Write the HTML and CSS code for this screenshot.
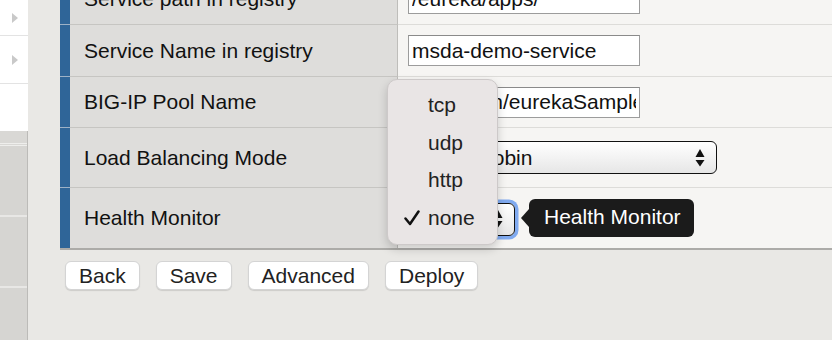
FILE: index.html
```html
<!DOCTYPE html>
<html>
<head>
<meta charset="utf-8">
<link rel="stylesheet" href="styles.css">
</head>
<body>
<div class="app">
  <aside class="sidebar">
    <div class="side-item short"><span class="tri"></span></div>
    <div class="side-item tall"><span class="tri"></span></div>
    <div class="side-blank"></div>
    <div class="side-gray">
      <div class="side-head"></div>
      <div class="side-row"></div>
      <div class="side-row"></div>
      <div class="side-row last"></div>
    </div>
  </aside>
  <main class="main">
    <div class="form">
      <div class="row r1">
        <div class="bar"></div>
        <div class="label">Service path in registry</div>
        <div class="value"><input class="field" type="text" value="/eureka/apps/"></div>
      </div>
      <div class="row r2">
        <div class="bar"></div>
        <div class="label">Service Name in registry</div>
        <div class="value"><input class="field" type="text" value="msda-demo-service"></div>
      </div>
      <div class="row r3">
        <div class="bar"></div>
        <div class="label">BIG-IP Pool Name</div>
        <div class="value"><input class="field" type="text" value="/Common/eurekaSamplePool"></div>
      </div>
      <div class="row r4">
        <div class="bar"></div>
        <div class="label">Load Balancing Mode</div>
        <div class="value">
          <div class="select wide">
            <span class="sel-text">round-robin</span>
            <svg class="arrows" width="10" height="18" viewBox="0 0 10 18"><path d="M0.5 8 L5 0 L9.5 8 Z M0.5 11 L9.5 11 L5 17.5 Z" fill="#111"/></svg>
          </div>
        </div>
      </div>
      <div class="row r5 last">
        <div class="bar"></div>
        <div class="label">Health Monitor</div>
        <div class="value">
          <div class="select-wrap">
            <div class="select small focus">
              <span class="sel-text">none</span>
              <svg class="arrows" width="10" height="18" viewBox="0 0 10 18"><path d="M0.5 8 L5 0 L9.5 8 Z M0.5 11 L9.5 11 L5 17.5 Z" fill="#111"/></svg>
            </div>
            <div class="popup">
              <div class="opt">tcp</div>
              <div class="opt">udp</div>
              <div class="opt">http</div>
              <div class="opt checked"><svg class="check" width="16" height="16" viewBox="0 0 16 16"><path d="M1.5 8.5 L6 14 L14.5 1.5" fill="none" stroke="#111" stroke-width="2.5" stroke-linecap="round" stroke-linejoin="round"/></svg>none</div>
            </div>
            <div class="tooltip">Health Monitor</div>
          </div>
        </div>
      </div>
    </div>
    <div class="actions">
      <button class="btn">Back</button>
      <button class="btn">Save</button>
      <button class="btn">Advanced</button>
      <button class="btn">Deploy</button>
    </div>
  </main>
</div>
</body>
</html>
```
FILE: styles.css
```css
* { box-sizing: border-box; }

body {
  margin: 0;
  height: 340px;
  overflow: hidden;
  background: #e9e8e5;
  font-family: "Liberation Sans", Arial, sans-serif;
  font-size: 21px;
  color: #111;
}

.app {
  display: flex;
  height: 340px;
}

/* sidebar */
.sidebar {
  width: 28px;
  flex: none;
  display: flex;
  flex-direction: column;
}
.side-item {
  background: #fff;
  border-bottom: 1px solid #e3e3e3;
  display: flex;
  align-items: center;
  padding-left: 12px;
}
.side-item.short { height: 36px; }
.side-item.tall { height: 48px; }
.tri {
  width: 0;
  height: 0;
  border-top: 5.5px solid transparent;
  border-bottom: 5.5px solid transparent;
  border-left: 6px solid #c9c9c9;
}
.side-blank {
  height: 47px;
  background: #fff;
}
.side-gray {
  flex: 1;
  width: 28px;
  background: #d6d5d2;
  border-right: 1px solid #bcbbb8;
  display: flex;
  flex-direction: column;
}
.side-head {
  height: 15px;
  background: #d9d8d5;
  border-bottom: 3px double #eeeeec;
}
.side-row {
  height: 71px;
  border-bottom: 2px solid #e8e7e5;
}
.side-row.last { flex: 1; border-bottom: none; }

/* main */
.main {
  flex: 1;
  padding-left: 32px;
  display: flex;
  flex-direction: column;
}
.form {
  margin-top: -27px;
  border-bottom: 2px solid #acaba8;
}
.row {
  display: grid;
  grid-template-columns: 10px 328px 1fr;
}
.r1, .r2 { height: 52px; }
.r3 { height: 51px; }
.r4, .r5 { height: 60px; }

.bar {
  background: #2f6598;
  border-bottom: 1px solid #9db1c6;
}
.label {
  background: #dedddb;
  border-right: 1px solid #bebdba;
  border-bottom: 1px solid #c6c5c2;
  padding-left: 14px;
  display: flex;
  align-items: center;
  white-space: nowrap;
}
.value {
  background: #f6f5f3;
  border-bottom: 1px solid #dddcd9;
  padding-left: 10px;
  display: flex;
  align-items: center;
}
.row.last .bar,
.row.last .label,
.row.last .value { border-bottom: none; }

.field {
  width: 232px;
  height: 31px;
  border: 1px solid #9c9c9c;
  border-top-color: #8a8a8a;
  background: #fff;
  padding: 0 3px;
  font-family: "Liberation Sans", Arial, sans-serif;
  font-size: 21px;
  color: #111;
  outline: none;
}

.select {
  height: 33px;
  border: 1.6px solid #111;
  border-radius: 6px;
  background: linear-gradient(#ffffff, #f3f3f3 50%, #e6e6e6);
  display: flex;
  align-items: center;
  justify-content: space-between;
  padding: 0 11px 0 16px;
}
.select.wide { width: 309px; }
.select.small { width: 107px; margin-top: 2px; }
.select.focus { box-shadow: 0 0 0 3.5px #80aaf0; }
.arrows { flex: none; }

.select-wrap { position: relative; }

.popup {
  position: absolute;
  left: -21px;
  top: -121.5px;
  width: 111px;
  height: 166px;
  background: #e9e5e5;
  border: 1px solid #cdc9c9;
  border-radius: 10px;
  box-shadow: 0 4px 10px rgba(0,0,0,0.18);
  padding-top: 6px;
}
.opt {
  height: 37.67px;
  line-height: 37.67px;
  padding-left: 40px;
  color: #222;
  position: relative;
}
.check {
  position: absolute;
  left: 16px;
  top: 11px;
}

.tooltip {
  position: absolute;
  left: 121px;
  top: -1.5px;
  height: 38px;
  padding: 0 13px 2px 15px;
  background: #1b1b1b;
  color: #fff;
  border-radius: 6px;
  display: flex;
  align-items: center;
  white-space: nowrap;
}
.tooltip::before {
  content: "";
  position: absolute;
  left: -8px;
  top: 10px;
  border-top: 9px solid transparent;
  border-bottom: 9px solid transparent;
  border-right: 8px solid #1b1b1b;
}

/* buttons */
.actions {
  display: flex;
  gap: 16px;
  padding: 11px 0 0 5px;
}
.btn {
  height: 29px;
  padding: 0 13px;
  background: #fff;
  border: 1px solid #d4d4d4;
  border-radius: 6px;
  box-shadow: 0 1px 1px rgba(0,0,0,0.12);
  font-family: "Liberation Sans", Arial, sans-serif;
  font-size: 21px;
  color: #222;
  line-height: 1;
}
```
